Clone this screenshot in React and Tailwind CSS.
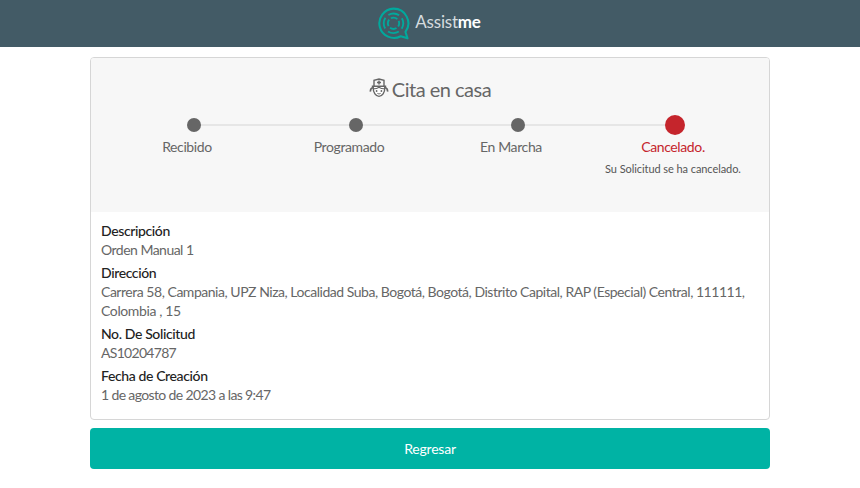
import React from "react";

const steps = [
  { label: "Recibido" },
  { label: "Programado" },
  { label: "En Marcha" },
];

const details = [
  { title: "Descripción", lines: [{ text: "Orden Manual 1", cls: "tracking-[-0.52px]" }] },
  {
    title: "Dirección",
    lines: [
      {
        text: "Carrera 58, Campania, UPZ Niza, Localidad Suba, Bogotá, Bogotá, Distrito Capital, RAP (Especial) Central, 111111,",
        cls: "tracking-[-0.47px]",
      },
      { text: "Colombia , 15", cls: "tracking-[-0.38px]" },
    ],
  },
  { title: "No. De Solicitud", lines: [{ text: "AS10204787", cls: "tracking-[-0.7px]" }] },
  { title: "Fecha de Creación", lines: [{ text: "1 de agosto de 2023 a las 9:47", cls: "tracking-[-0.63px]" }] },
];

function Logo() {
  return (
    <svg width="33" height="33" viewBox="0 0 32 32" fill="none" stroke="#00a99d" className="-translate-x-[2px]">
      <path d="M16 1.6A14.2 14.2 0 1 0 23 28.4L29.6 30.4L27.6 24.2A14.2 14.2 0 0 0 16 1.6Z" strokeWidth="2" strokeLinejoin="round" />
      <circle cx="16" cy="15.8" r="9.5" strokeWidth="1.8" strokeDasharray="11 3.92" strokeDashoffset="5.5" />
      <circle cx="16" cy="15.8" r="5.5" strokeWidth="1.8" strokeDasharray="6.6 2.04" strokeDashoffset="3.3" />
    </svg>
  );
}

function NurseIcon() {
  return (
    <svg width="20" height="20" viewBox="0 0 20 20" fill="none" stroke="#666" strokeWidth="1.4">
      <path d="M5 8.5V2.4L10 1L15 2.4V8.5" fill="#f7f7f7" />
      <path d="M10 2.6V6.6M8 4.6H12" strokeWidth="1.5" />
      <path d="M2.8 8.4H17.2" strokeWidth="1.8" />
      <path d="M4.2 9C4 15 7 18.4 10 18.4C13 18.4 16 15 15.8 9" fill="#fff" />
      <path d="M4 9.4C2.2 10 1.2 11.4 1.4 13.6M16 9.4C17.8 10 18.8 11.4 18.6 13.6" strokeWidth="1.6" />
      <path d="M5 10.8C7 10.8 8.6 10.2 10 9.2C11.4 10.2 13 10.8 15 10.8" strokeWidth="1.1" />
      <circle cx="7.6" cy="13" r="0.9" fill="#666" stroke="none" />
      <circle cx="12.4" cy="13" r="0.9" fill="#666" stroke="none" />
      <path d="M8.4 15.4C9.4 16 10.6 16 11.6 15.4" strokeWidth="1" />
    </svg>
  );
}

export default function App() {
  return (
    <div className="min-h-[488px] bg-white font-['Lato',sans-serif] text-[14px] text-[#666]">
      <header className="h-[47px] bg-[#435b66] flex items-center justify-center gap-[3px]">
        <Logo />
        <div className="text-[17px] text-[#d5dcdf] tracking-[-0.2px] -mt-[4px]">
          Assist<span className="font-bold text-white">me</span>
        </div>
      </header>

      <main className="w-[680px] mx-auto pt-[10px]">
        <div className="border border-[#d6d6d6] rounded-[4px] overflow-hidden">
          <div className="h-[154px] bg-[#f7f7f7] px-[15px] pt-[17px]">
            <div className="flex items-center justify-center h-[28px] text-[20px] leading-[28px] text-[#666] gap-[3px] tracking-[-0.5px]">
              <span className="-mt-[3px]"><NurseIcon /></span>
              <span className="-mt-[1px]">Cita en casa</span>
            </div>
            <div className="grid grid-cols-4 mt-[12px] tracking-[-0.38px]">
              {steps.map((step) => (
                <div key={step.label} className="relative text-center">
                  <div className="absolute left-[88px] top-[9px] w-[162px] h-[2px] bg-[#e6e6e6]" />
                  <div className="relative h-[20px] pl-[14px] pt-[3px] flex justify-center">
                    <div className="w-[14px] h-[14px] rounded-full bg-[#666]" />
                  </div>
                  <div className="mt-[2px] leading-[20px]">{step.label}</div>
                </div>
              ))}
              <div className="relative text-center">
                <div className="relative h-[20px] pl-[4px] flex justify-center">
                  <div className="w-[20px] h-[20px] rounded-full bg-[#c5252c]" />
                </div>
                <div className="mt-[2px] leading-[20px] text-[#c5252c]">Cancelado.</div>
                <div className="mt-[4px] text-[11px] leading-[16px] text-[#555] tracking-[-0.07px]">Su Solicitud se ha cancelado.</div>
              </div>
            </div>
          </div>

          <div className="px-[10px] pt-[9px] pb-[15px] flex flex-col gap-[4px] leading-[19px]">
            {details.map((item) => (
              <div key={item.title}>
                <div className="font-medium text-[#222] tracking-[-0.38px]">{item.title}</div>
                {item.lines.map((line) => (
                  <div key={line.text} className={line.cls}>{line.text}</div>
                ))}
              </div>
            ))}
          </div>
        </div>

        <button className="mt-[8px] w-full h-[41px] rounded-[4px] bg-[#00b3a4] text-white text-[14px] tracking-[-0.2px]">
          Regresar
        </button>
      </main>
    </div>
  );
}
